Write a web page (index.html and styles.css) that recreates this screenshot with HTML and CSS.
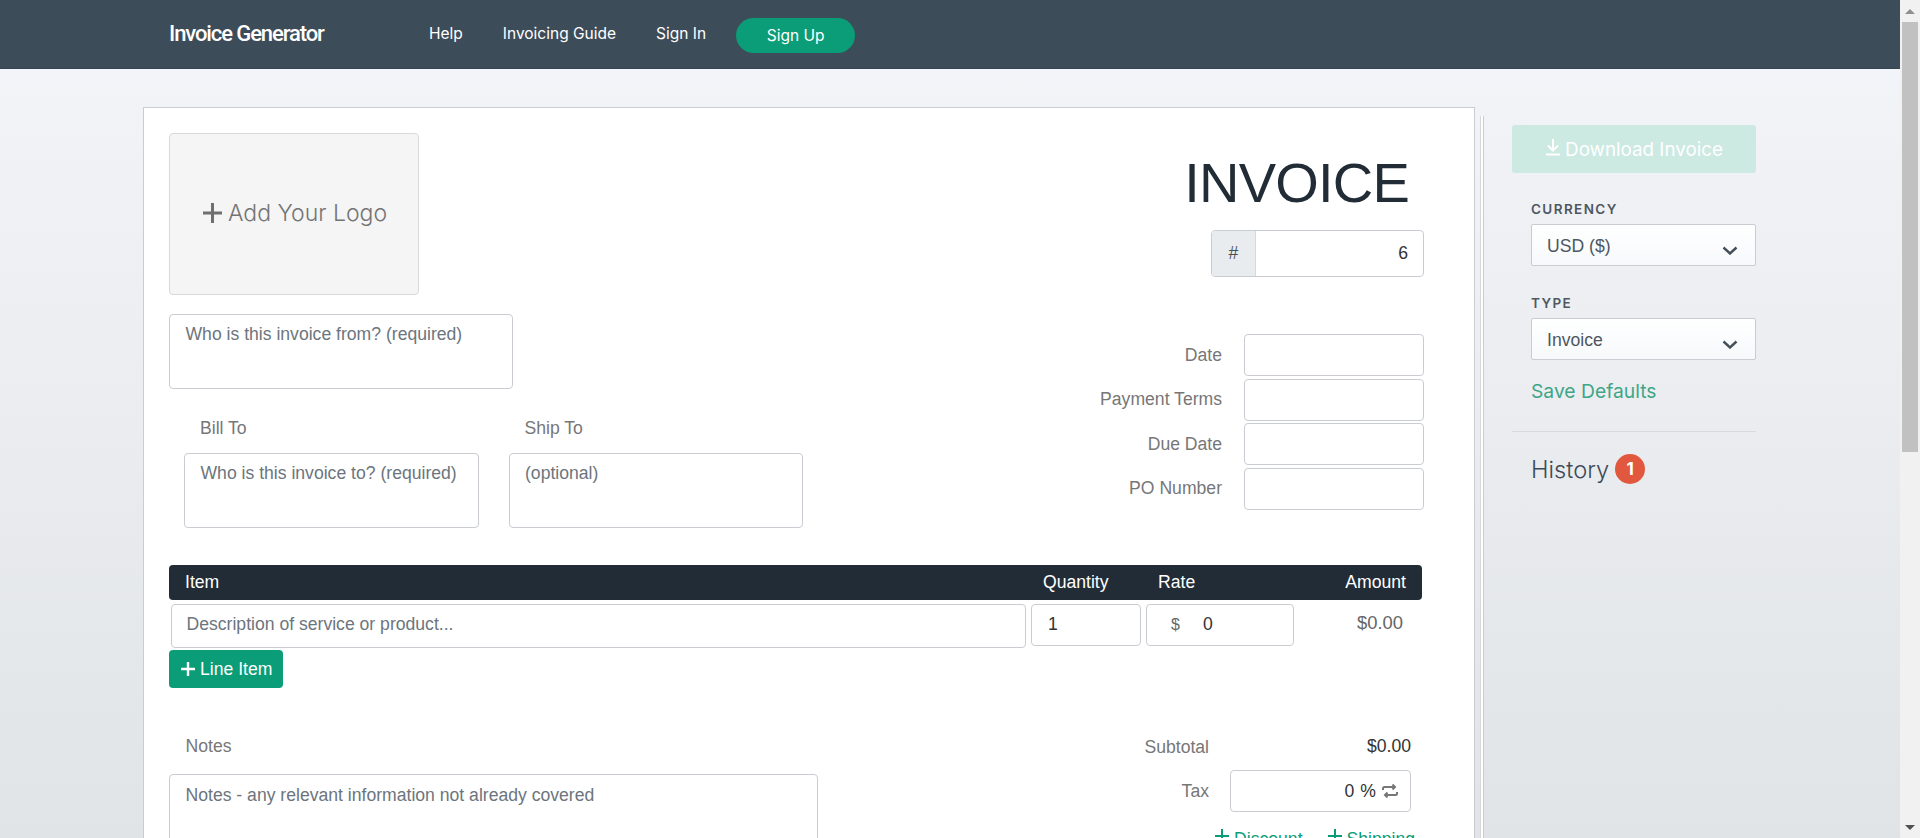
FILE: index.html
```html
<!DOCTYPE html>
<html lang="en">
<head>
<meta charset="utf-8">
<title>Invoice Generator</title>
<link rel="stylesheet" href="styles.css">
</head>
<body>
<div class="window">
  <div class="viewport">
    <nav class="nav">
      <a class="brand">Invoice Generator</a>
      <a class="nav-link">Help</a>
      <a class="nav-link">Invoicing Guide</a>
      <a class="nav-link">Sign In</a>
      <a class="signup">Sign Up</a>
    </nav>
    <div class="content">
      <main class="card">
        <div class="head">
          <div class="head-left">
            <div class="logo">
              <svg class="logo-plus" viewBox="0 0 19 20"><path d="M9.5 0v20M0 10h19"/></svg>
              <span>Add Your Logo</span>
            </div>
            <div class="box box-from">Who is this invoice from? (required)</div>
            <div class="parties">
              <div class="party">
                <div class="party-label">Bill To</div>
                <div class="box box-party">Who is this invoice to? (required)</div>
              </div>
              <div class="party">
                <div class="party-label">Ship To</div>
                <div class="box box-party">(optional)</div>
              </div>
            </div>
          </div>
          <div class="head-right">
            <h1 class="title">INVOICE</h1>
            <div class="number">
              <span class="number-addon">#</span>
              <span class="number-value">6</span>
            </div>
            <div class="meta">
              <div class="meta-row"><span class="meta-label">Date</span><span class="meta-input"></span></div>
              <div class="meta-row"><span class="meta-label">Payment Terms</span><span class="meta-input"></span></div>
              <div class="meta-row"><span class="meta-label">Due Date</span><span class="meta-input"></span></div>
              <div class="meta-row"><span class="meta-label">PO Number</span><span class="meta-input"></span></div>
            </div>
          </div>
        </div>

        <div class="items-head">
          <span class="col-item">Item</span>
          <span class="col-qty">Quantity</span>
          <span class="col-rate">Rate</span>
          <span class="col-amount">Amount</span>
        </div>
        <div class="item-row">
          <div class="box cell-desc">Description of service or product...</div>
          <div class="box cell-qty">1</div>
          <div class="box cell-rate"><span class="cell-currency">$</span><span>0</span></div>
          <div class="cell-amount">$0.00</div>
        </div>
        <button class="add-line" type="button">
          <svg class="add-plus" viewBox="0 0 14 14"><path d="M7 0v14M0 7h14"/></svg>Line Item
        </button>

        <div class="bottom">
          <div class="notes">
            <div class="notes-label">Notes</div>
            <div class="box box-notes">Notes - any relevant information not already covered</div>
          </div>
          <div class="totals">
            <div class="total-row">
              <span class="total-label">Subtotal</span>
              <span class="total-value">$0.00</span>
            </div>
            <div class="tax-row">
              <span class="total-label">Tax</span>
              <div class="tax-input">
                <span>0</span><span class="tax-percent">%</span>
                <svg class="tax-swap" viewBox="0 0 16 14"><path d="M1 6V4.500Q1 3 2.500 3H13M10.500 0.500 13 3l-2.500 2.500M15 8v1.500Q15 11 13.500 11H3M5.500 8.500 3 11l2.500 2.500"/></svg>
              </div>
            </div>
            <div class="extras">
              <a class="extra"><svg class="extra-plus" viewBox="0 0 14 14"><path d="M7 0v14M0 7h14"/></svg>Discount</a>
              <a class="extra"><svg class="extra-plus" viewBox="0 0 14 14"><path d="M7 0v14M0 7h14"/></svg>Shipping</a>
            </div>
          </div>
        </div>
      </main>
      <div class="paper-edge"></div>
      <aside class="sidebar">
        <button class="download" type="button">
          <svg class="download-icon" viewBox="0 0 16 17"><path d="M8 0v11M3 6.500 8 11.500l5-5M1 15.500h14"/></svg>Download Invoice
        </button>
        <div class="side-group">
          <div class="side-label">CURRENCY</div>
          <div class="select"><span>USD ($)</span><svg class="chevron" viewBox="0 0 16 9"><path d="M1.500 1.500 8 7.500l6.500-6"/></svg></div>
          <div class="side-label side-label-type">TYPE</div>
          <div class="select"><span>Invoice</span><svg class="chevron" viewBox="0 0 16 9"><path d="M1.500 1.500 8 7.500l6.500-6"/></svg></div>
          <a class="save">Save Defaults</a>
        </div>
        <hr class="side-rule">
        <div class="history"><span>History</span><span class="badge">1</span></div>
      </aside>
    </div>
  </div>
  <div class="scrollbar">
    <div class="arrow-up"></div>
    <div class="thumb"></div>
    <div class="arrow-down"></div>
  </div>
</div>
</body>
</html>
```

FILE: styles.css
```css
* { box-sizing: border-box; }
html, body { margin: 0; height: 838px; overflow: hidden; }
body { font-family: "Liberation Sans", Arial, sans-serif; font-size: 17.600px; color: #333; }
h1, hr { margin: 0; }

.window { display: flex; height: 838px; background: #f3f3f3; }
.viewport { width: 1900px; flex: none; display: flex; flex-direction: column; }

/* scrollbar */
.scrollbar { flex: 1; display: flex; flex-direction: column; align-items: center; padding: 9px 0 8px; background: #f1f1f1; }
.arrow-up { width: 0; height: 0; border: 5px solid transparent; border-top: 0; border-bottom-color: #8f8f8f; }
.thumb { width: 16px; height: 430px; margin-top: 8px; background: #c1c1c1; }
.arrow-down { width: 0; height: 0; margin-top: auto; border: 5px solid transparent; border-bottom: 0; border-top-color: #505050; }

/* nav */
.nav { height: 69px; flex: none; display: flex; align-items: center; padding-left: 169px; background: #3d4c59; border-bottom: 1px solid #37454f; color: #fff; font-family: Inter, sans-serif; }
.brand { width: 260px; margin-top: -2px; font-family: Roboto, sans-serif; font-size: 22px; font-weight: 500; letter-spacing: -1.100px; }
.nav-link { margin-right: 40px; margin-top: -2px; font-size: 15.500px; }
.nav-link:nth-child(4) { margin-right: 30px; }
.signup { width: 119px; height: 35px; margin-top: 3px; border-radius: 18px; background: #0a9d78; text-align: center; line-height: 35px; font-size: 15.500px; }

/* page */
.content { flex: 1; min-height: 0; display: flex; padding: 38px 0 0 143px; background: linear-gradient(#f1f4f8, #f0f1f4 15%, #e0e4e7); }
.card { width: 1332px; flex: none; padding: 25px 50px 0 25px; overflow: hidden; background: #fff; border: 1px solid #c9ccd0; border-bottom: 0; }
.paper-edge { width: 4px; margin: 9px 0 0 5px; flex: none; background: #fff; border-left: 1px solid #d8d8d4; border-right: 1px solid #c8ccd0; }

.box { border: 1px solid #c9cdd2; border-radius: 4px; background: #fff; color: #6c757d; }

/* header block */
.head { display: flex; justify-content: space-between; }
.head-left { width: 634px; }
.logo { width: 250px; height: 162px; display: flex; align-items: center; padding: 0 0 3px 33px; gap: 6px; background: #f5f5f5; border: 1px solid #d9d9d9; border-radius: 4px; color: #747474; font-family: Inter, sans-serif; font-size: 23px; font-weight: 300; }
.logo-plus { width: 19px; height: 20px; fill: none; stroke: #6f6f6f; stroke-width: 3; }
.box-from { width: 344px; height: 75px; margin-top: 19px; padding: 7px 15.500px; line-height: 24px; }
.parties { display: flex; gap: 30px; padding-left: 15px; }
.party { width: 295px; }
.party-label { margin-top: 27px; padding-left: 16px; line-height: 24px; color: #777; }
.box-party { height: 75px; margin-top: 13px; padding: 7px 15.500px; line-height: 24px; }

.head-right { width: 300px; display: flex; flex-direction: column; align-items: flex-end; }
.title { height: 97px; padding-right: 15px; font-size: 56px; font-weight: 400; line-height: 100px; letter-spacing: -0.800px; color: #222c36; }
.number { width: 213px; height: 47px; display: flex; border: 1px solid #c9cdd2; border-radius: 4px; overflow: hidden; line-height: 45px; }
.number-addon { width: 44px; flex: none; background: #e9ecef; border-right: 1px solid #d5d8dc; text-align: center; color: #495057; }
.number-value { flex: 1; padding-right: 15px; text-align: right; }
.meta { display: flex; flex-direction: column; gap: 2.670px; margin-top: 57px; }
.meta-row { display: flex; align-items: center; justify-content: flex-end; gap: 22px; }
.meta-label { color: #777; white-space: nowrap; }
.meta-input { width: 180px; height: 42px; flex: none; border: 1px solid #c9cdd2; border-radius: 4px; }

/* line items */
.items-head { display: flex; width: 1253px; height: 35px; margin-top: 37px; padding-left: 16px; background: #222c36; border-radius: 4px; color: #fff; line-height: 34px; }
.col-item { width: 858px; }
.col-qty { width: 115px; }
.col-rate { width: 100px; }
.col-amount { width: 148px; text-align: right; }
.item-row { display: flex; align-items: flex-start; gap: 5px; margin-top: 4px; padding-left: 2px; }
.cell-desc { width: 855px; height: 44px; padding: 0 14.500px; line-height: 39px; }
.cell-qty { width: 110px; height: 42px; padding: 0 16px; line-height: 39px; color: #333; }
.cell-rate { width: 148px; height: 42px; display: flex; padding-left: 24px; line-height: 39px; color: #333; }
.cell-currency { width: 32px; font-size: 16px; color: #666; }
.cell-amount { width: 104px; line-height: 38px; font-size: 18.400px; text-align: right; color: #666; }
.add-line { display: flex; align-items: center; gap: 5px; width: 114px; height: 38px; margin-top: 2px; padding: 0 0 0 12px; border: 0; border-radius: 4px; background: #0a9d78; color: #fff; font: 17.600px "Liberation Sans", Arial, sans-serif; }
.add-plus { width: 14px; height: 14px; fill: none; stroke: #fff; stroke-width: 2.400; }

/* bottom */
.bottom { display: flex; justify-content: space-between; margin-top: 46px; }
.notes { width: 649px; }
.notes-label { padding-left: 16.500px; line-height: 24px; color: #777; }
.box-notes { height: 130px; margin-top: 16px; padding: 8px 15.500px; line-height: 24px; }
.totals { width: 260px; margin-right: 13px; color: #777; }
.total-row { display: flex; justify-content: space-between; margin-top: 1px; line-height: 24px; }
.total-label { width: 58px; flex: none; white-space: nowrap; display: flex; justify-content: flex-end; }
.total-value { color: #333; margin-top: -1px; }
.tax-row { display: flex; align-items: center; justify-content: space-between; margin-top: 11px; }
.tax-input { width: 181px; height: 42px; display: flex; align-items: center; justify-content: flex-end; padding-right: 12px; border: 1px solid #c9cdd2; border-radius: 4px; color: #333; }
.tax-percent { margin-left: 6px; }
.tax-swap { width: 16px; height: 14px; margin-left: 6px; fill: none; stroke: #777; stroke-width: 2; }
.extras { display: flex; gap: 25px; justify-content: flex-end; margin: 15px -4px 0 0; color: #0a9d78; white-space: nowrap; }
.extra { display: flex; align-items: center; gap: 5px; line-height: 24px; }
.extra-plus { width: 14px; height: 14px; margin-top: -7px; fill: none; stroke: #0a9d78; stroke-width: 2; }

/* sidebar */
.sidebar { width: 244px; margin-left: 28px; padding-top: 18px; flex: none; font-family: Inter, sans-serif; }
.download { display: flex; align-items: center; justify-content: center; gap: 4px; width: 244px; height: 48px; padding: 0; border: 0; border-radius: 3px; background: #cce9e2; color: #fff; font: 18.800px Inter, sans-serif; }
.download-icon { width: 16px; height: 17px; margin-top: -3px; fill: none; stroke: #fff; stroke-width: 2; }
.side-group { padding: 27px 0 0 19px; }
.side-label { font-size: 13.500px; font-weight: 600; line-height: 18px; letter-spacing: 1.400px; color: #4d5761; }
.side-label-type { margin-top: 28px; }
.select { display: flex; align-items: center; justify-content: space-between; height: 42px; margin-top: 6px; padding: 2px 17px 0 15px; background: linear-gradient(#fff, #f6f9fb); border: 1px solid #c9cdd2; border-radius: 2px; font-family: "Liberation Sans", Arial, sans-serif; color: #4d5761; }
.chevron { width: 16px; height: 9px; margin-top: 8px; fill: none; stroke: #454f58; stroke-width: 2.400; }
.save { display: block; margin-top: 18px; line-height: 26px; font-size: 19.300px; color: #3da688; }
.side-rule { margin-top: 27px; border: 0; border-top: 1px solid #d6dade; }
.history { display: flex; align-items: center; gap: 6px; margin-top: 22px; padding-left: 19px; font-size: 23.700px; font-weight: 300; color: #3d4a56; }
.badge { width: 30px; height: 30px; border-radius: 50%; background: #e2583e; color: #fff; text-align: center; font-size: 17px; font-weight: 700; line-height: 30px; }
```
